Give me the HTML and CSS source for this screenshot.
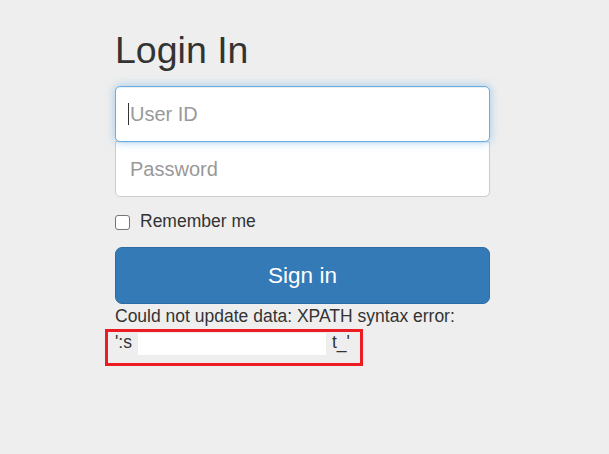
FILE: index.html
```html
<!DOCTYPE html>
<html lang="en">
<head>
  <meta charset="UTF-8">
  <meta name="viewport" content="width=device-width, initial-scale=1.0">
  <title>Login In</title>
  <link rel="stylesheet" href="styles.css">
</head>
<body>
<div class="container">
  <form class="form-signin">
    <h2 class="form-signin-heading">Login In</h2>
    <div class="field">
      <input type="text" class="form-control first focused" placeholder="User ID">
      <span class="caret"></span>
    </div>
    <input type="password" class="form-control last" placeholder="Password">
    <div class="checkbox">
      <label>
        <input type="checkbox" value="remember-me">
        Remember me
      </label>
    </div>
    <button class="btn-signin" type="button">Sign in</button>
    <div class="error">
      Could not update data: XPATH syntax error:
      <div class="error-line">':s<span class="redacted"></span>t_'<span class="highlight"></span></div>
    </div>
  </form>
</div>
</body>
</html>
```

FILE: styles.css
```css
*, *::before, *::after {
  box-sizing: border-box;
}

body {
  margin: 0;
  background-color: #eee;
  color: #333;
  font-family: "Liberation Sans", Arial, sans-serif;
  font-size: 17.5px;
  line-height: 25px;
}

.container {
  padding-left: 115px;
}

.form-signin {
  width: 375px;
}

.form-signin-heading {
  margin: 30px 0 15px;
  font-size: 37.5px;
  font-weight: normal;
  line-height: 41px;
}

.field {
  position: relative;
}

.form-control {
  display: block;
  width: 100%;
  height: 56px;
  padding: 12px 13px 12px 14px;
  font-family: inherit;
  font-size: 20px;
  color: #555;
  background-color: #fff;
  border: 1px solid #ccc;
  border-radius: 5px;
  outline: none;
  box-shadow: inset 0 1px 1px rgba(0, 0, 0, .075);
}

.form-control::placeholder {
  color: #999;
}

.form-control.first {
  position: relative;
  z-index: 2;
  margin-bottom: -1px;
}

.form-control.last {
  border-top-left-radius: 0;
  border-top-right-radius: 0;
}

.focused {
  border-color: #66afe9;
  box-shadow: inset 0 1px 1px rgba(0, 0, 0, .075), 0 0 10px rgba(102, 175, 233, .6);
}

.caret {
  position: absolute;
  z-index: 3;
  left: 13px;
  top: 17px;
  width: 1px;
  height: 22px;
  background-color: #333;
}

.checkbox {
  margin: 12px 0 13px;
}

.checkbox label {
  display: flex;
  align-items: center;
  gap: 10px;
  cursor: pointer;
}

.checkbox input {
  appearance: none;
  margin: 1px 0 0;
  width: 15px;
  height: 15px;
  background-color: #fff;
  border: 1px solid #767676;
  border-radius: 3px;
}

.btn-signin {
  display: block;
  width: 100%;
  height: 57px;
  padding: 0;
  font-family: inherit;
  font-size: 22.5px;
  color: #fff;
  background-color: #337ab7;
  border: 1px solid #2e6da4;
  border-radius: 7px;
}

.error {
  color: #333;
}

.error-line {
  position: relative;
  display: flex;
  align-items: flex-start;
  height: 40px;
  padding-top: 1px;
}

.highlight {
  position: absolute;
  left: -10px;
  top: 0;
  width: 258px;
  height: 37px;
  border: 3px solid #ec1c24;
}

.redacted {
  display: inline-block;
  width: 188px;
  height: 22px;
  margin: 3px 6px 0 6px;
  background-color: #fff;
}
```
